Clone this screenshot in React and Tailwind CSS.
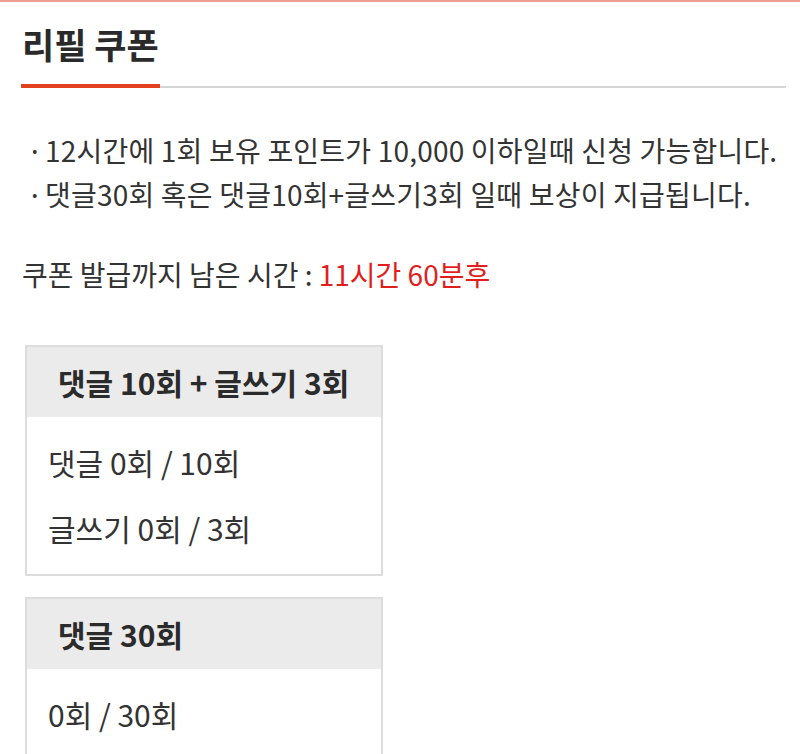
import React from 'react';

const font = { fontFamily: '"Noto Sans CJK KR", "Noto Sans", sans-serif' };

const MissionBox = ({ title, rows }) => (
    <div className="w-[358px] border-2 border-[#dddddd] bg-white">
        <div className="h-[70px] bg-[#ebebeb] pl-[31px] flex items-center text-[30px] font-bold text-[#2b2b2b]">
            {title}
        </div>
        <div className="px-[21px] pt-[23px] pb-6 flex flex-col gap-[22px]">
            {rows.map((r) => (
                <p key={r} className="text-[30px] leading-[44px] text-[#333]">{r}</p>
            ))}
        </div>
    </div>
);

export default function App() {
    return (
        <div className="min-h-[754px] bg-white overflow-hidden" style={font}>
            <div className="h-[2px] bg-[#ec9f8e]" />
            <div className="pl-[21px] pr-[14px]">
                <h1 className="pt-[20px] text-[35px] leading-[44px] font-bold text-[#2a2a2a] pl-[1px]">리필 쿠폰</h1>
                <div className="mt-[18px] flex items-end">
                    <div className="w-[139px] h-[4px] bg-[#e2401f]" />
                    <div className="flex-1 h-[2px] bg-[#d4d4d4]" />
                </div>

                <ul className="mt-[40px] text-[28px] leading-[44px] text-[#333] tracking-[0.2px]">
                    <li className="flex">
                        <span className="w-[24px] pl-[6px]">·</span>
                        <span>12시간에 1회 보유 포인트가 10,000 이하일때 신청 가능합니다.</span>
                    </li>
                    <li className="flex">
                        <span className="w-[24px] pl-[6px]">·</span>
                        <span>댓글30회 혹은 댓글10회+글쓰기3회 일때 보상이 지급됩니다.</span>
                    </li>
                </ul>

                <p className="mt-[36px] text-[28px] leading-[44px] text-[#333] pl-[1px]">
                    쿠폰 발급까지 남은 시간 : <span className="text-[#e01e1e]">11시간 60분후</span>
                </p>

                <div className="mt-[49px] ml-[4px] flex flex-col gap-[21px]">
                    <MissionBox title="댓글 10회 + 글쓰기 3회" rows={['댓글 0회 / 10회', '글쓰기 0회 / 3회']} />
                    <MissionBox title="댓글 30회" rows={['0회 / 30회']} />
                </div>
            </div>
        </div>
    );
}
